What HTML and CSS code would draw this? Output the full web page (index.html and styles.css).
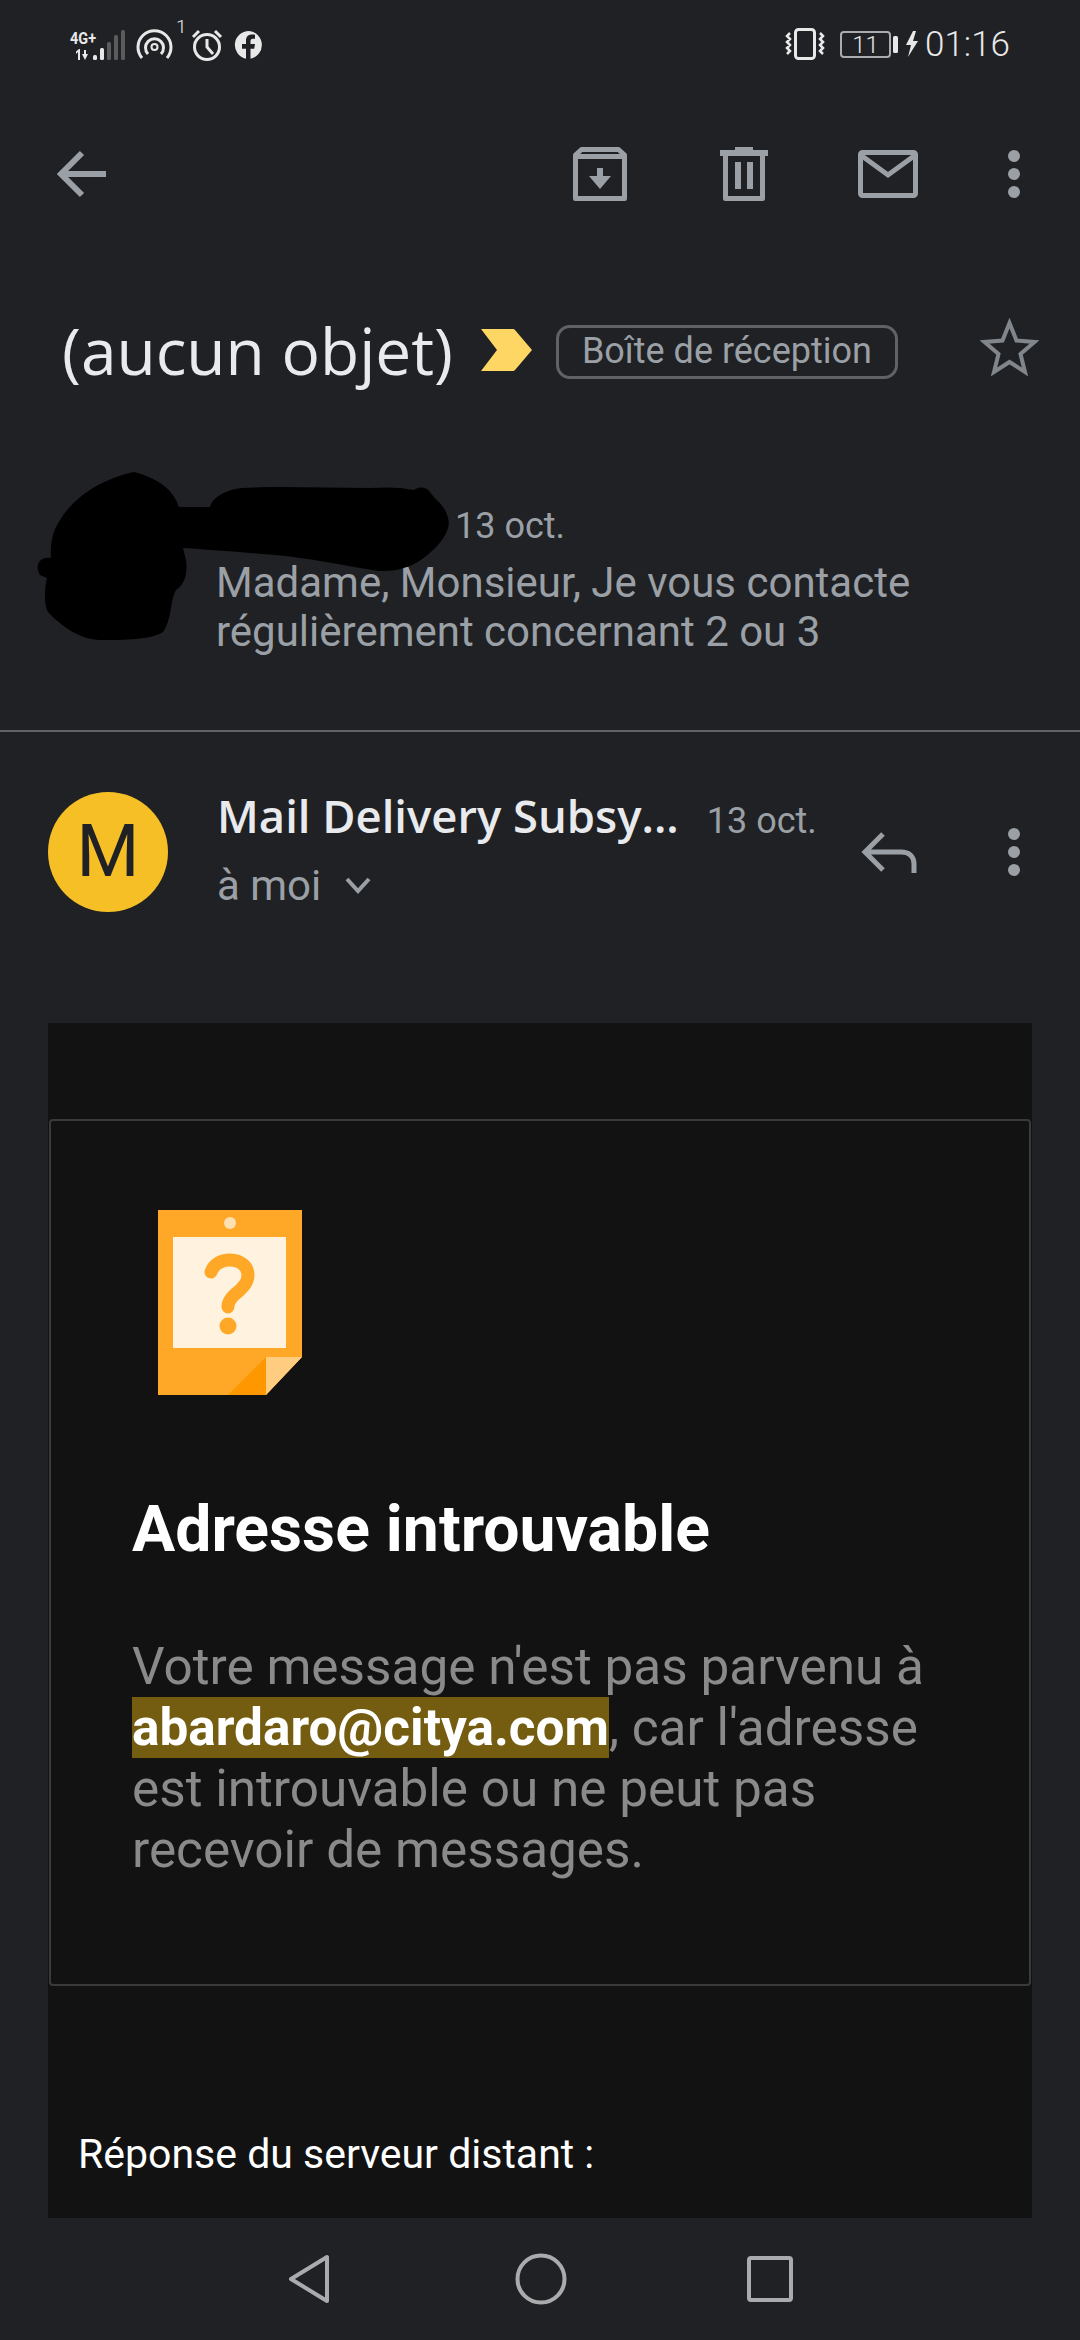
FILE: index.html
```html
<!DOCTYPE html>
<html lang="fr">

<head>
    <meta charset="UTF-8">
    <meta name="viewport" content="width=device-width, initial-scale=1.0">
    <title>(aucun objet)</title>
    <link rel="stylesheet" href="styles.css">
</head>

<body>
    <div class="screen">
        <div class="status-bar">
            <svg class="status-left" width="200" height="88" viewBox="66 0 200 88">
                <text x="70" y="44" class="net-label" textLength="26" lengthAdjust="spacingAndGlyphs">4G+</text>
                <path d="M78 60v-8l-2 2v-2.500l3-2.500h1v11zM84 50h2v4h2l-3 6-3-6h2z" fill="#e8e8e8" />
                <rect x="93" y="55" width="4" height="5" rx="1.500" fill="#e8e8e8" />
                <rect x="100" y="48" width="4" height="12" rx="1.500" fill="#e8e8e8" />
                <rect x="107" y="42" width="4" height="18" rx="1.500" fill="#5a5b5d" />
                <rect x="114" y="35" width="4" height="25" rx="1.500" fill="#5a5b5d" />
                <rect x="121" y="30" width="4" height="30" rx="1.500" fill="#5a5b5d" />
                <path d="M142 58a16.500 16.500 0 1 1 25 0M148 54a9 9 0 1 1 13 0" fill="none" stroke="#e8e8e8" stroke-width="3" />
                <circle cx="154.500" cy="47" r="3" fill="none" stroke="#e8e8e8" stroke-width="2" />
                <text x="176" y="33" class="sup-label">1</text>
                <circle cx="207" cy="47" r="12.500" fill="none" stroke="#e8e8e8" stroke-width="3" />
                <path d="M207 39v8l6 7M193 37l6-6M221 37l-6-6" fill="none" stroke="#e8e8e8" stroke-width="3" />
                <path d="M249 31a14 14 0 0 0-3 27.700v-10h-4v-4.700h4v-3.500c0-4 2.500-6 6-6 1.500 0 3 .2 3 .2v4h-2c-2 0-2.500 1.200-2.500 2.500v2.800h4.500l-.8 4.700h-3.700v10a14 14 0 0 0-1.500-27.700z" fill="#e8e8e8" />
            </svg>
            <div class="status-right">
                <svg width="42" height="32" viewBox="0 0 42 32">
                    <rect x="11.500" y="1.500" width="19" height="29" rx="3" fill="none" stroke="#e8e8e8" stroke-width="3" />
                    <path d="M6 5l-3 3 3 3-3 3 3 3-3 3 3 3-3 3M36 5l3 3-3 3 3 3-3 3 3 3-3 3 3 3" fill="none" stroke="#e8e8e8" stroke-width="2.500" />
                </svg>
                <div class="battery">11</div>
                <svg class="charge" width="26" height="26" viewBox="0 0 26 26">
                    <rect x="0" y="5" width="5" height="17" rx="1.500" fill="#e8e8e8" />
                    <path d="M20 0l-7 14h5l-3 12 10-16h-5l3-10z" fill="#e8e8e8" />
                </svg>
                <span class="clock">01:16</span>
            </div>
        </div>

        <div class="toolbar">
            <svg class="icon" viewBox="0 0 72 72">
                <path d="M60 36H16M36 15L15 36l21 21" fill="none" stroke="#9aa0a6" stroke-width="6" />
            </svg>
            <div class="toolbar-actions">
                <svg class="icon" viewBox="0 0 72 72">
                    <path d="M11.500 60.500V17l6-5.500h37l6 5.500v43.500zM11.500 18.500h49" fill="none" stroke="#9aa0a6" stroke-width="5" stroke-linejoin="round" />
                    <path d="M33 30h6v8h8L36 51 25 38h8z" fill="#9aa0a6" />
                </svg>
                <svg class="icon" viewBox="0 0 72 72">
                    <path d="M12 12h15V9h18v3h15v6H12z" fill="#9aa0a6" />
                    <path d="M17.500 16v44.500h37V16" fill="none" stroke="#9aa0a6" stroke-width="5" stroke-linejoin="round" />
                    <path d="M27 24h6v27h-6zM39 24h6v27h-6z" fill="#9aa0a6" />
                </svg>
                <svg class="icon" viewBox="0 0 72 72">
                    <rect x="8.500" y="14.500" width="55" height="43" rx="2" fill="none" stroke="#9aa0a6" stroke-width="5" />
                    <path d="M10 18l26 19 26-19" fill="none" stroke="#9aa0a6" stroke-width="5" />
                </svg>
                <svg class="icon icon-more" viewBox="0 0 72 72">
                    <circle cx="36" cy="18" r="6" fill="#9aa0a6" />
                    <circle cx="36" cy="36" r="6" fill="#9aa0a6" />
                    <circle cx="36" cy="54" r="6" fill="#9aa0a6" />
                </svg>
            </div>
        </div>

        <div class="subject-row">
            <h1 class="subject">(aucun objet)</h1>
            <svg class="marker" width="51" height="42" viewBox="0 0 51 42">
                <path d="M0 0h32a3 3 0 0 1 2 1l17 20-17 20a3 3 0 0 1-2 1H0l16-21z" fill="#fdd663" />
            </svg>
            <span class="chip">Boîte de réception</span>
            <svg class="star" width="59" height="58" viewBox="0 0 59 58">
                <path d="M29.500 5l7 17.500 18 1.500-14 12 4.500 18-15.500-10-15.500 10 4.500-18-14-12 18-1.500z" fill="none" stroke="#80868b" stroke-width="4" />
            </svg>
        </div>

        <div class="prev-message">
            <div class="prev-head"><span class="name-hidden"></span><span class="date">13 oct.</span></div>
            <p class="prev-text">Madame, Monsieur, Je vous contacte<br>régulièrement concernant 2 ou 3</p>
            <svg class="scribble" width="470" height="190" viewBox="30 465 470 190">
                <path d="M134 472C105 478 75 495 60 520C52 532 50 545 51 558C40 556 34 565 40 575L47 578C44 590 44 605 48 612C60 625 80 640 100 640C125 640 150 640 163 632C172 620 170 600 176 590C184 585 188 575 186 560L183 548C215 550 250 553 275 555C310 558 340 565 379 571C400 572 415 565 425 557C440 545 452 530 448 518C445 505 435 500 430 492C425 486 418 487 414 490C400 487 385 487 370 488C325 488 280 486 241 488C225 490 212 498 210 507H179C175 495 165 480 134 472z" fill="#000" />
            </svg>
        </div>

        <div class="sender-row">
            <div class="avatar">M</div>
            <div class="sender-info">
                <div class="sender-line"><span class="sender-name">Mail Delivery Subsy...</span><span class="date">13 oct.</span></div>
                <div class="recipient">à moi
                    <svg class="recipient-caret" width="26" height="17" viewBox="0 0 26 17">
                        <path d="M2 2l11 12L24 2" fill="none" stroke="#9aa0a6" stroke-width="4" />
                    </svg>
                </div>
            </div>
            <svg class="icon" viewBox="0 0 72 72">
                <path d="M62 57V48c0-8-5-12-13-12H14M31 18L13 36l18 18" fill="none" stroke="#9aa0a6" stroke-width="5" />
            </svg>
            <svg class="icon icon-more" viewBox="0 0 72 72">
                <circle cx="36" cy="18" r="6" fill="#9aa0a6" />
                <circle cx="36" cy="36" r="6" fill="#9aa0a6" />
                <circle cx="36" cy="54" r="6" fill="#9aa0a6" />
            </svg>
        </div>

        <div class="mail-body">
            <div class="notice">
                <svg class="notice-icon" width="144" height="185" viewBox="0 0 144 185">
                    <path d="M0 0h144v147l-36 38H0z" fill="#ffa726" />
                    <rect x="15" y="27" width="113" height="111" fill="#fff3e0" />
                    <circle cx="72" cy="13" r="6" fill="#ffe0b2" />
                    <path d="M53 62C56 54 63 50 72 50C83 50 90 57 90 65C90 72 86 76 81 81C75 86 70 90 70 97" fill="none" stroke="#ffa726" stroke-width="13" stroke-linecap="round" />
                    <circle cx="70" cy="116" r="8.500" fill="#ffa726" />
                    <path d="M108 147h36l-36 38z" fill="#ffcc80" />
                    <path d="M108 147v38H70z" fill="#ff9800" />
                </svg>
                <h2 class="notice-title">Adresse introuvable</h2>
                <p class="notice-text">Votre message n'est pas parvenu à<br><span class="address">abardaro@citya.com</span>, car l'adresse<br>est introuvable ou ne peut pas<br>recevoir de messages.</p>
            </div>
            <p class="server-reply">Réponse du serveur distant :</p>
        </div>

        <div class="nav-bar">
            <svg class="nav-back" width="44" height="50" viewBox="0 0 44 50">
                <path d="M40 3v44L4 25z" fill="none" stroke="#a9abad" stroke-width="4" stroke-linejoin="round" />
            </svg>
            <svg width="52" height="52" viewBox="0 0 52 52">
                <circle cx="26" cy="26" r="23.500" fill="none" stroke="#a9abad" stroke-width="4" />
            </svg>
            <svg width="46" height="46" viewBox="0 0 46 46">
                <rect x="2" y="2" width="42" height="42" rx="2" fill="none" stroke="#a9abad" stroke-width="4" />
            </svg>
        </div>
    </div>
</body>

</html>
```

FILE: styles.css
```css
body,
html {
    margin: 0px;
    background-color: #202124;
    font-family: Roboto, "Liberation Sans", sans-serif;
}

h1,
h2,
p {
    margin: 0;
    padding: 0;
}

.screen {
    display: flex;
    flex-direction: column;
    height: 2340px;
    overflow: hidden;
}

.status-bar {
    display: flex;
    justify-content: space-between;
    align-items: center;
    height: 88px;
    padding: 0 70px 0 66px;
    flex: none;
}

.status-left {
    display: block;
}

.net-label {
    font-family: Roboto, sans-serif;
    font-size: 17px;
    font-weight: 700;
    fill: #e8e8e8;
}

.sup-label {
    font-family: Roboto, sans-serif;
    font-size: 19px;
    font-weight: 300;
    fill: #e8e8e8;
}

.status-right {
    display: flex;
    align-items: center;
}

.battery {
    width: 47px;
    height: 23px;
    margin-left: 14px;
    border: 2px solid #a9abad;
    border-radius: 4px;
    font-size: 24px;
    font-weight: 300;
    line-height: 24px;
    text-align: center;
    color: #e8e8e8;
}

.charge {
    margin-left: 2px;
}

.clock {
    margin-left: 6px;
    font-size: 35px;
    font-weight: 300;
    color: #e8e8e8;
}

.icon {
    display: block;
    width: 72px;
    height: 72px;
    flex: none;
}

.toolbar {
    display: flex;
    justify-content: space-between;
    height: 122px;
    padding: 50px 30px 0 46px;
    flex: none;
}

.toolbar-actions {
    display: flex;
    gap: 72px;
}

.toolbar-actions .icon-more {
    margin-left: -18px;
}

.subject-row {
    display: flex;
    align-items: center;
    height: 180px;
    padding: 0 41px 0 62px;
    flex: none;
}

.subject {
    font-family: "Open Sans", sans-serif;
    font-size: 64px;
    font-weight: 400;
    color: #e8eaed;
    white-space: nowrap;
}

.marker {
    margin-left: 28px;
    flex: none;
}

.chip {
    margin: 3px 0 0 24px;
    padding: 0 23px;
    height: 48px;
    border: 3px solid #5f6368;
    border-radius: 14px;
    font-size: 36px;
    line-height: 46px;
    color: #9aa0a6;
    white-space: nowrap;
}

.star {
    margin: -6px 0 0 auto;
    flex: none;
}

.prev-message {
    position: relative;
    height: 292px;
    box-sizing: border-box;
    padding: 64px 0 0 216px;
    border-bottom: 2px solid #5f6368;
    flex: none;
}

.prev-head {
    display: flex;
    align-items: baseline;
    line-height: 44px;
}

.name-hidden {
    width: 239px;
}

.date {
    font-size: 36px;
    color: #9aa0a6;
    white-space: nowrap;
}

.prev-text {
    margin-top: 10px;
    font-size: 42px;
    line-height: 49px;
    color: #9aa0a6;
}

.scribble {
    position: absolute;
    left: 30px;
    top: 25px;
}

.sender-row {
    display: flex;
    align-items: center;
    height: 291px;
    box-sizing: border-box;
    padding: 60px 30px 111px 48px;
    flex: none;
}

.avatar {
    width: 120px;
    height: 120px;
    margin-right: 49px;
    border-radius: 50%;
    background-color: #f6bf26;
    font-size: 72px;
    font-weight: 400;
    line-height: 120px;
    text-align: center;
    color: #202124;
    flex: none;
}

.sender-info {
    flex: 1;
    padding-bottom: 11px;
}

.sender-line {
    display: flex;
    align-items: baseline;
    gap: 28px;
}

.sender-name {
    font-family: "Open Sans", sans-serif;
    font-size: 45.400px;
    font-weight: 600;
    color: #e8eaed;
    white-space: nowrap;
}

.recipient {
    display: flex;
    align-items: center;
    gap: 24px;
    margin-top: 15px;
    font-size: 42px;
    color: #9aa0a6;
}

.sender-row .icon-more {
    margin-left: 54px;
}

.mail-body {
    flex: 1;
    min-height: 0;
    margin: 0 48px;
    padding-top: 96px;
    background-color: #121212;
}

.notice {
    height: 867px;
    box-sizing: border-box;
    margin: 0 1px;
    padding: 89px 60px 0 81px;
    border: 2px solid #3a3a3a;
    border-radius: 4px;
}

.notice-icon {
    display: block;
    margin-left: 26px;
}

.notice-title {
    margin-top: 96px;
    font-size: 64.300px;
    font-weight: 700;
    color: #fff;
}

.notice-text {
    margin-top: 69px;
    font-size: 51.300px;
    line-height: 61px;
    color: #8a8a8a;
    white-space: nowrap;
}

.address {
    display: inline-block;
    background-color: #745c10;
    font-weight: 700;
    color: #fff;
}

.server-reply {
    margin-top: 144px;
    padding-left: 30px;
    font-size: 41px;
    color: #fff;
}

.nav-bar {
    display: flex;
    justify-content: center;
    align-items: center;
    gap: 180px;
    height: 122px;
    padding-right: 1px;
    background-color: #202124;
    flex: none;
}

.nav-back {
    margin-right: 4px;
}
```
